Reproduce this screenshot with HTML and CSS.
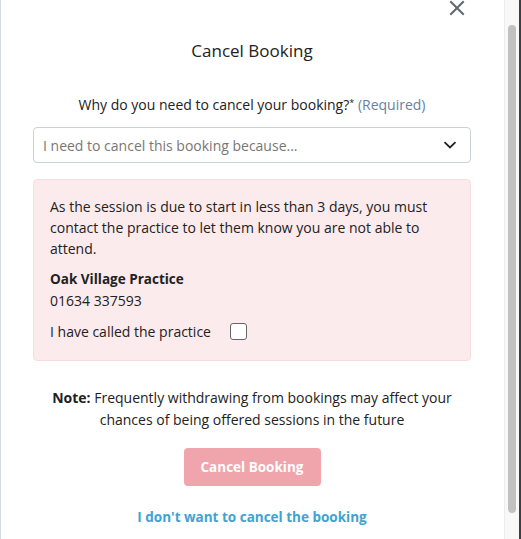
FILE: index.html
```html
<!DOCTYPE html>
<html lang="en">
<head>
<meta charset="utf-8">
<title>Cancel Booking</title>
<link rel="stylesheet" href="styles.css">
</head>
<body>
<div class="frame">
  <div class="modal">
    <button class="close" aria-label="Close">
      <svg width="16" height="16" viewBox="0 0 16 16"><path d="M2 2 L14 14 M14 2 L2 14" stroke="#5d6870" stroke-width="2" stroke-linecap="square"/></svg>
    </button>
    <h1 class="title">Cancel Booking</h1>
    <p class="label">Why do you need to cancel your booking?<sup>*</sup> <span class="req">(Required)</span></p>
    <div class="select">
      <span class="placeholder">I need to cancel this booking because...</span>
      <svg width="14" height="8" viewBox="0 0 14 8"><path d="M1.5 1.2 L7 6.5 L12.5 1.2" fill="none" stroke="#222" stroke-width="1.8"/></svg>
    </div>
    <div class="alert">
      <p class="msg">As the session is due to start in less than 3 days, you must contact the practice to let them know you are not able to attend.</p>
      <p class="practice">Oak Village Practice</p>
      <p class="phone">01634 337593</p>
      <label class="check"><span>I have called the practice</span><span class="box"></span></label>
    </div>
    <p class="note"><b>Note:</b> Frequently withdrawing from bookings may affect your chances of being offered sessions in the future</p>
    <div class="actions">
      <button class="btn">Cancel Booking</button>
      <a class="link" href="#">I don't want to cancel the booking</a>
    </div>
  </div>
  <div class="scrollbar"><div class="thumb"></div></div>
  <div class="edge"></div>
</div>
</body>
</html>
```
FILE: styles.css
```css
* { box-sizing: border-box; }
html, body { margin: 0; padding: 0; background: #fff; }
body { font-family: "Open Sans", "Noto Sans", sans-serif; color: #222; font-size: 14px; }
.frame { display: flex; height: 539px; overflow: hidden; }
.modal {
  position: relative;
  flex: 1;
  border-left: 1px solid #d3dbe0;
  padding: 0 33px 0 32px;
  display: flex;
  flex-direction: column;
}
.close {
  position: absolute;
  top: 0;
  right: 39px;
  border: 0;
  background: none;
  padding: 0;
  width: 16px;
  height: 16px;
}
.close svg { display: block; }
.title { margin: 40px 0 0; font-size: 17px; font-weight: 400; text-align: center; line-height: 22px; }
.label { margin: 33px 0 0; text-align: center; line-height: 20px; }
.label sup { font-size: 9px; vertical-align: 4px; line-height: 0; }
.req { color: #6880a0; }
.select {
  margin-top: 12px;
  height: 36px;
  border: 1px solid #ccd2d6;
  border-radius: 4px;
  display: flex;
  align-items: center;
  justify-content: space-between;
  padding: 0 13px 0 9px;
}
.placeholder { color: #777; }
.alert {
  margin-top: 16px;
  background: #fcebed;
  border: 1px solid #f8dde0;
  border-radius: 4px;
  padding: 16px 16px 18px;
}
.alert p { margin: 0; line-height: 21px; }
.practice { font-weight: 700; font-size: 13.5px; margin-top: 10px !important; }
.check { display: flex; align-items: center; gap: 19px; margin-top: 10px; line-height: 21px; }
.box { width: 17px; height: 17px; border: 1px solid #666; border-radius: 3px; background: #fff; }
.note { margin: 26px 10px 0; text-align: center; line-height: 22px; }
.actions { display: flex; flex-direction: column; align-items: center; }
.btn {
  margin-top: 17px;
  width: 137px;
  height: 38px;
  border: 0;
  border-radius: 4px;
  background: #f0a4ab;
  color: #fff;
  font: 700 13.5px "Open Sans", "Noto Sans", sans-serif;
}
.link { margin-top: 21px; color: #3ea3d2; font-weight: 700; font-size: 13.5px; text-decoration: none; line-height: 20px; }
.scrollbar {
  width: 15px;
  background: #f8f8f8;
  border-left: 1px solid #ececec;
  padding: 25px 3px 0 3px;
}
.thumb { height: 488px; background: #c1c1c1; border-radius: 4px; }
.edge { width: 2px; background: #3a3f44; }
```
